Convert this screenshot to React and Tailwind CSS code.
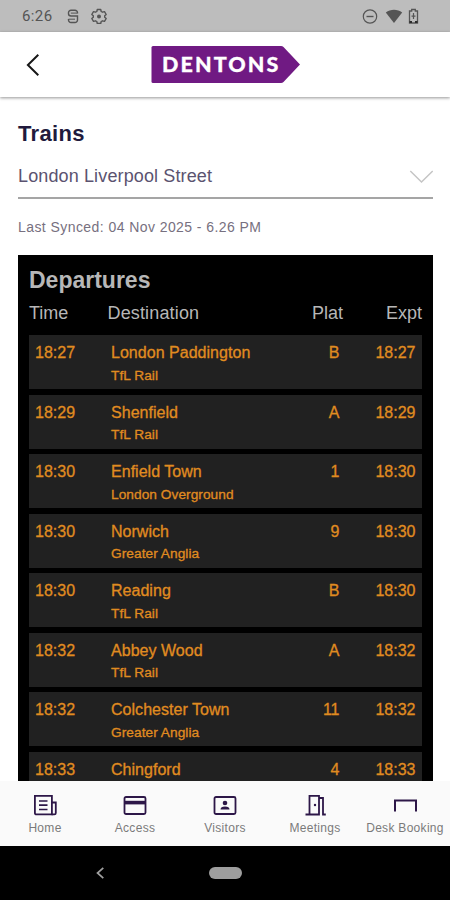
import React from "react";

const departures = [
  { time: "18:27", to: "London Paddington", by: "TfL Rail", plat: "B" },
  { time: "18:29", to: "Shenfield", by: "TfL Rail", plat: "A" },
  { time: "18:30", to: "Enfield Town", by: "London Overground", plat: "1" },
  { time: "18:30", to: "Norwich", by: "Greater Anglia", plat: "9" },
  { time: "18:30", to: "Reading", by: "TfL Rail", plat: "B" },
  { time: "18:32", to: "Abbey Wood", by: "TfL Rail", plat: "A" },
  { time: "18:32", to: "Colchester Town", by: "Greater Anglia", plat: "11" },
  { time: "18:33", to: "Chingford", plat: "4" },
];

function StatusBar() {
  return (
    <div className="flex h-8 shrink-0 items-center bg-[#bdbdbd] pl-[22px] pr-[30px] text-[#555]">
      <span className="w-[45px] font-[Roboto,sans-serif] text-[15px] leading-[34px] tracking-[0.4px]">6:26</span>
      <svg className="h-4 w-[12px]" viewBox="0 0 12 16" fill="none" stroke="currentColor" strokeWidth="1.4">
        <path d="M10.500 5.500V4.800A2.500 2.500 0 0 0 8 2.300H4A2.500 2.500 0 0 0 1.500 4.800V5.500A2.500 2.500 0 0 0 4 8h6.500v4A2.500 2.500 0 0 1 8 14.500H4a2.500 2.500 0 0 1-2.500-2.500v-1" />
        <path d="M3.800 5.100h6.500M1.500 11.200h6.500" strokeWidth="1" />
      </svg>
      <svg className="ml-[12px] h-4 w-4" viewBox="0 0 16 16" fill="none" stroke="currentColor" strokeWidth="1.400" strokeLinejoin="round">
        <path d="M6.300 1.500h3.400l.5 2 1.300.7 2-.6 1.700 2.900-1.500 1.300v1.400l1.500 1.300-1.700 2.900-2-.6-1.300.7-.5 2H6.300l-.5-2-1.300-.7-2 .6L.8 10.500l1.500-1.300V7.800L.8 6.500l1.700-2.900 2 .6L5.800 3.500z" />
        <circle cx="8" cy="8.500" r="2" fill="currentColor" stroke="none" />
      </svg>
      <svg className="ml-auto h-4 w-4" viewBox="0 0 16 16" fill="none" stroke="currentColor" strokeWidth="1.200">
        <circle cx="8" cy="8.500" r="6.700" />
        <path d="M4.500 8.500h7" strokeWidth="1.400" />
      </svg>
      <svg className="ml-[7px] h-4 w-[18px]" viewBox="0 0 18 16" fill="currentColor">
        <path d="M.8 4.500C5.500.9 12.500.9 17.200 4.500L9 15z" />
      </svg>
      <svg className="mr-[1px] ml-[5px] h-4 w-[11px]" viewBox="0 0 11 16" fill="none" stroke="currentColor" strokeWidth="1.300">
        <path d="M3.700 3V1.500h3.600V3H9.500V15H1.500V3z" />
        <path d="M5.500 5v6M3.500 8.200h4" strokeWidth="1.200" />
        <path d="M1.500 14h2.500M7 14h2.500" strokeWidth="2" stroke="#2b2b2b" />
      </svg>
    </div>
  );
}

function Header() {
  return (
    <header className="z-10 flex h-[65px] shrink-0 items-center bg-white pl-[26px] shadow-[0_1px_3px_rgba(0,0,0,0.42)]">
      <svg className="h-6 w-[14px]" viewBox="0 0 14 24" fill="none" stroke="#171717" strokeWidth="2">
        <path d="M12.300 1.700 1.900 12l10.400 10.300" />
      </svg>
      <div className="ml-[111px] grid h-[37px] w-[149px] items-center">
        <svg className="col-start-1 row-start-1 h-[37px] w-[149px]" viewBox="0 0 149 37">
          <path d="M2 0h128q1.500 0 2.500 1L149 18.500 132.500 36q-1 1-2.500 1H2q-1.500 0-1.500-1.500v-34Q.5 0 2 0z" fill="#701a83" />
        </svg>
        <span className="col-start-1 row-start-1 pb-px pl-[11px] font-[Lato,sans-serif] text-[21.5px] leading-[36px] font-black tracking-[2.1px] text-white [-webkit-text-stroke:0.3px_#fff]">DENTONS</span>
      </div>
    </header>
  );
}

function Departure({ time, to, by, plat }) {
  return (
    <li className="flex h-[54px] shrink-0 bg-[#212121] pt-[8px] pr-[6.5px] pl-[6px] text-[16px] leading-5 text-[#e08c20] [-webkit-text-stroke:0.3px_#e08c20]">
      <span className="w-[76px]">{time}</span>
      <div className="flex grow flex-col">
        <span className="tracking-[0.03px]">{to}</span>
        {by && <span className="pt-[2.500px] text-[13.7px] leading-5 tracking-[0.05px]">{by}</span>}
      </div>
      <span className="w-10 text-right">{plat}</span>
      <span className="w-[76px] text-right">{time}</span>
    </li>
  );
}

function NavItem({ label, children }) {
  return (
    <div className="flex w-[90px] flex-col items-center pt-3">
      <svg className="h-6 w-6" viewBox="0 0 24 24" fill="none" stroke="#2d1748" strokeWidth="1.800">
        {children}
      </svg>
      <span className="mt-[3px] text-[12px] leading-4 tracking-[0.3px] whitespace-nowrap text-[#7a7a7a]">{label}</span>
    </div>
  );
}

export default function App() {
  return (
    <div className="flex h-[900px] w-[450px] flex-col overflow-hidden bg-white font-['Liberation_Sans',Arial,sans-serif]">
      <StatusBar />
      <Header />
      <main className="flex min-h-0 grow flex-col overflow-hidden pt-[21px] pr-[17px] pl-[18px]">
        <h1 className="text-[22px] leading-8 font-bold tracking-[0.35px] text-[#211a3d]">Trains</h1>
        <div className="mt-[7px] flex h-[42px] shrink-0 items-start justify-between border-b-2 border-[#a5a5a5] pt-[6px]">
          <span className="-mt-px text-[18px] leading-7 tracking-[0.13px] whitespace-nowrap text-[#5b5370]">London Liverpool Street</span>
          <svg className="mt-[6px] h-4 w-6" viewBox="0 0 24 16" fill="none" stroke="#c5c5c5" strokeWidth="1.500">
            <path d="m1.300 2 11.200 11L23.700 2" />
          </svg>
        </div>
        <p className="mt-[18px] text-[14px] leading-5 tracking-[0.43px] text-[#777080]">Last Synced: 04 Nov 2025 - 6.26 PM</p>
        <section className="mt-[18px] flex min-h-0 grow flex-col overflow-hidden bg-black px-[11px] pt-[9px] text-[#b7b7b7]">
          <h2 className="text-[23px] leading-8 font-bold">Departures</h2>
          <div className="flex h-[39px] shrink-0 pt-[1px] text-[18px] leading-8">
            <span className="w-[78.500px]">Time</span>
            <span className="grow tracking-[0.15px]">Destination</span>
            <span className="w-[60px] text-right">Plat</span>
            <span className="w-[79px] text-right">Expt</span>
          </div>
          <ul className="flex flex-col gap-[5.570px]">
            {departures.map((d, i) => (
              <Departure key={i} {...d} />
            ))}
          </ul>
        </section>
      </main>
      <nav className="flex h-[65px] shrink-0 bg-[#fafafa]">
        <NavItem label="Home">
          <path d="M1.900 2.900h17v18.500H3.400Q1.900 21.400 1.900 20z" />
          <path d="M18.500 9.500h4.300V20q0 1.400-1.500 1.400h-2.800" />
          <path d="M6 8h8.500M6 12.200h8.500M6 16.500h8.500" strokeWidth="1.700" />
        </NavItem>
        <NavItem label="Access">
          <rect x="1.500" y="4" width="21" height="17" rx="1.500" />
          <path d="M2 9.600h20" strokeWidth="3.600" />
        </NavItem>
        <NavItem label="Visitors">
          <rect x="1.500" y="4" width="21" height="17" rx="1.500" />
          <circle cx="12" cy="10" r="2.300" fill="#2d1748" stroke="none" />
          <path d="M7.500 16.500q0-3 4.500-3t4.500 3z" fill="#2d1748" stroke="none" />
        </NavItem>
        <NavItem label="Meetings">
          <path d="M2.500 21.500h4V2.800h9.500v18.700H6.500M16 5h4v16.500h2.800" />
          <circle cx="12" cy="12" r="1.200" fill="#2d1748" stroke="none" />
        </NavItem>
        <NavItem label="Desk Booking">
          <path d="M2 18.500V7.500h21v11" strokeWidth="2" />
        </NavItem>
      </nav>
      <footer className="flex h-[54px] shrink-0 items-center bg-black pl-[96px]">
        <svg className="h-3 w-2" viewBox="0 0 8 12" fill="none" stroke="#a0a0a0" strokeWidth="1.700">
          <path d="M7.300.8 1.500 6l5.800 5.200" />
        </svg>
        <div className="ml-[105px] h-3 w-[33px] rounded-full bg-[#9e9e9e]" />
      </footer>
    </div>
  );
}
